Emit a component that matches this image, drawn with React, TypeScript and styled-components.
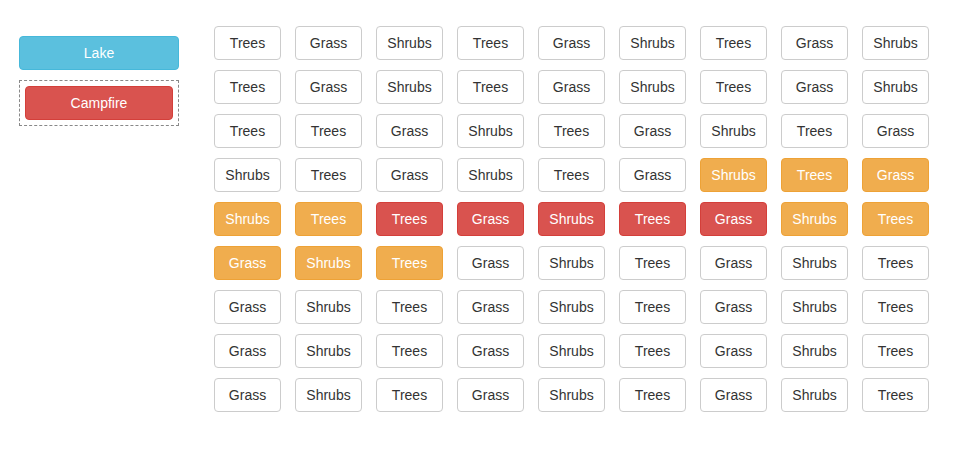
import styled, { createGlobalStyle, css } from "styled-components";

const GlobalStyle = createGlobalStyle`
    * {
        box-sizing: border-box;
    }
    body {
        margin: 0;
        background: #fff;
        font-family: "Liberation Sans", Arial, sans-serif;
        font-size: 14px;
        color: #333;
    }
`;

type Tone = "default" | "info" | "danger" | "warning";

const tones = {
    default: css`
        background-color: #fff;
        border-color: #ccc;
        color: #333;
    `,
    info: css`
        background-color: #5bc0de;
        border-color: #46b8da;
        color: #fff;
    `,
    danger: css`
        background-color: #d9534f;
        border-color: #d43f3a;
        color: #fff;
    `,
    warning: css`
        background-color: #f0ad4e;
        border-color: #eea236;
        color: #fff;
    `,
};

const rows: string[] = [
    "T G S T G S T G S",
    "T G S T G S T G S",
    "T T G S T G S T G",
    "S T G S T G S* T* G*",
    "S* T* T! G! S! T! G! S* T*",
    "G* S* T* G S T G S T",
    "G S T G S T G S T",
    "G S T G S T G S T",
    "G S T G S T G S T",
];

const names: Record<string, string> = { T: "Trees", G: "Grass", S: "Shrubs" };

function parseCell(code: string): { label: string; tone: Tone } {
    const tone: Tone = code.endsWith("*") ? "warning" : code.endsWith("!") ? "danger" : "default";
    return { label: names[code[0]], tone };
}

export default function App() {
    return (
        <>
            <GlobalStyle />
            <Page>
                <Sidebar>
                    <Btn $tone="info" $block>Lake</Btn>
                    <DropZone>
                        <Btn $tone="danger" $block>Campfire</Btn>
                    </DropZone>
                </Sidebar>
                <Grid>
                    {rows.flatMap((row, r) =>
                        row.split(" ").map((code, c) => {
                            const cell = parseCell(code);
                            return (
                                <Btn key={`${r}-${c}`} $tone={cell.tone}>
                                    {cell.label}
                                </Btn>
                            );
                        })
                    )}
                </Grid>
            </Page>
        </>
    );
}

const Page = styled.div`
    display: flex;
    align-items: flex-start;
    padding: 26px 0 0 19px;
`;

const Sidebar = styled.div`
    width: 160px;
    margin-top: 10px;
    display: flex;
    flex-direction: column;
    gap: 10px;
`;

const DropZone = styled.div`
    border: 1px dashed #888;
    padding: 5px;
`;

const Grid = styled.div`
    margin-left: 35px;
    display: grid;
    grid-template-columns: repeat(9, 67px);
    column-gap: 14px;
    row-gap: 10px;
`;

const Btn = styled.button<{ $tone: Tone; $block?: boolean }>`
    display: block;
    width: ${(p) => (p.$block ? "100%" : "67px")};
    height: 34px;
    padding: 6px 0;
    font-family: "Liberation Sans", Arial, sans-serif;
    font-size: 14px;
    line-height: 20px;
    text-align: center;
    border: 1px solid;
    border-radius: 4px;
    cursor: pointer;
    ${(p) => tones[p.$tone]}
`;
